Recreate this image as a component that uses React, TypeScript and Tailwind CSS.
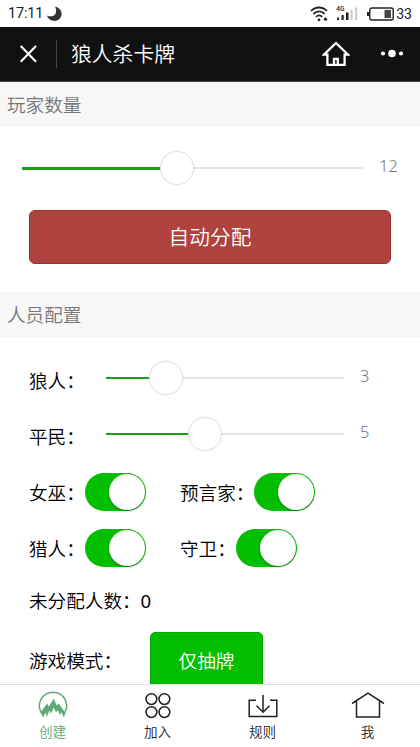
import type { ReactNode } from "react";
import { clsx } from "clsx";

interface TabItem {
  label: string;
  icon: ReactNode;
  active?: boolean;
}

const TABS: TabItem[] = [
  { label: "创建", icon: <MountainIcon />, active: true },
  { label: "加入", icon: <CirclesIcon /> },
  { label: "规则", icon: <InboxIcon /> },
  { label: "我", icon: <HouseIcon /> },
];

export default function App() {
  return (
    <div className="flex h-[747px] w-[420px] flex-col overflow-hidden bg-white font-['Noto_Sans','Noto_Sans_CJK_SC',sans-serif] text-[18.6px] font-[350] text-black">
      <StatusBar />
      <NavBar />

      <main className="min-h-0 flex-1 overflow-hidden">
        <SectionTitle>玩家数量</SectionTitle>
        <div className="h-[165px]">
          <div className="flex h-[83px] items-center pl-[22px]">
            <Slider className="w-[341px]" percent={45.4} />
            <SliderValue>12</SliderValue>
          </div>
          <button className="mx-auto block h-[54px] w-[362px] rounded-md border border-[#963330] bg-[#b0433f] text-[20.7px] leading-[52px] text-white">
            自动分配
          </button>
        </div>

        <SectionTitle>人员配置</SectionTitle>
        <div className="pl-[29px] pt-[13px]">
          <SliderRow label="狼人：" percent={25} value={3} />
          <SliderRow label="平民：" percent={41.7} value={5} />

          <div className="mt-0.5 flex h-14 items-center">
            <div className="flex w-[151px] items-center">
              <SwitchField label="女巫：" />
            </div>
            <SwitchField label="预言家：" />
          </div>
          <div className="flex h-14 items-center">
            <div className="flex w-[151px] items-center">
              <SwitchField label="猎人：" />
            </div>
            <SwitchField label="守卫：" />
          </div>

          <p className="flex h-[50px] items-center">
            未分配人数：<span className="font-normal">0</span>
          </p>
          <div className="mt-[6px] flex h-[57px] items-center">
            <span className="w-[121px]">游戏模式：</span>
            <button className="h-[57px] w-[113px] rounded-[5px] border border-[#02a802] bg-[#04be02] text-white">
              仅抽牌
            </button>
          </div>
        </div>
      </main>

      <nav className="grid h-[63px] shrink-0 grid-cols-4 border-t border-[#dedede] bg-white">
        {TABS.map((tab) => (
          <div
            key={tab.label}
            className={clsx(
              "flex flex-col items-center pt-[6px] text-[13.6px] leading-5",
              tab.active ? "text-[#5fa975]" : "text-[#222]",
            )}
          >
            {tab.icon}
            <span className="mt-[3px]">{tab.label}</span>
          </div>
        ))}
      </nav>
    </div>
  );
}

function StatusBar() {
  return (
    <div className="flex h-[27px] shrink-0 items-center pl-2 pr-[8px] text-[#222]">
      <span className="w-[34px] pt-0.5 font-[Roboto,sans-serif] text-[14.5px] font-normal leading-none tracking-[-0.2px]">17:11</span>
      <svg className="ml-[4px]" width="17" height="16" viewBox="0 0 17 16">
        <path d="M9 .5C13.4 2 15.8 4.6 15.6 8.2C15.2 12.8 11 15.6 7 14.8C3.8 14 1.8 12 .8 9.4C4 11 7.6 10.6 9.2 8.2C10.6 6 10.4 3.2 9 .5Z" fill="#333" />
      </svg>

      <svg className="ml-auto" width="18" height="16" viewBox="0 0 18 16" fill="none" stroke="#222" strokeWidth="1.8">
        <path d="M1 5C5.5.3 12.5.3 17 5M3.5 8C6.8 4.6 11.4 4.6 14.6 8M6 10.9C8 8.9 10.2 8.9 12.2 10.9" />
        <circle cx="9" cy="13.8" r="1.4" fill="#222" stroke="none" />
        <circle cx="15.5" cy="13.2" r="1.6" fill="#222" stroke="none" />
      </svg>
      <div className="relative ml-2 h-4 w-[22px]">
        <span className="absolute left-0 top-0 font-[Roboto,sans-serif] text-[6.5px] font-medium leading-[7px]">4G</span>
        <svg width="22" height="16" viewBox="0 0 22 16">
          <path d="M1 11.5h2V14H1zM5.5 9h2.2v5H5.5zM10 6.5h2.5V14H10z" fill="#222" />
          <path d="M14.5 4h2.2v10h-2.2zM19 1.5h2.2V14H19z" fill="#ccc" />
        </svg>
      </div>
      <svg className="ml-[9px]" width="27" height="14" viewBox="0 0 27 14">
        <rect x="2.8" y="1" width="23.4" height="12" rx="2" fill="none" stroke="#222" strokeWidth="1.4" />
        <path d="M0 5h2.5v4H0z" fill="#222" />
        <path d="M17.5 3H24v8h-6.5z" fill="#444" />
      </svg>
      <span className="ml-[2px] font-[Roboto,sans-serif] text-[14px] font-normal leading-none">33</span>
    </div>
  );
}

function NavBar() {
  return (
    <header className="flex h-[55px] shrink-0 items-center border-b border-[#444] bg-[#111] pl-5 pr-4 text-white">
      <svg width="17" height="18" viewBox="0 0 17 18" fill="none" stroke="currentColor" strokeWidth="2.2">
        <path d="M.7 1L16 16.8M16 1L.7 16.8" />
      </svg>
      <span className="ml-[19px] h-7 w-px bg-[#444]" />
      <h1 className="ml-[14px] pt-px text-[20.8px] leading-none">狼人杀卡牌</h1>
      <svg className="ml-auto" width="28" height="26" viewBox="0 0 28 26" fill="none" stroke="currentColor" strokeWidth="2.3">
        <path d="M2 13.6L14 2L26 13.6H22.6V23.8H5.4V13.6Z" />
        <path d="M12 23V17.8H15.8V23" />
      </svg>
      <svg className="ml-[30px]" width="24" height="10" viewBox="0 0 24 10" fill="currentColor">
        <circle cx="3" cy="4.5" r="2.1" />
        <circle cx="12" cy="4.5" r="3.8" />
        <circle cx="21" cy="4.5" r="2.1" />
      </svg>
    </header>
  );
}

function SectionTitle({ children }: { children: ReactNode }) {
  return (
    <h2 className="flex h-[45px] items-center bg-[#f7f7f7] pl-[7px] pt-px text-[#777]">{children}</h2>
  );
}

function Slider({ percent, className }: { percent: number; className?: string }) {
  return (
    <div className={clsx("relative -mt-px h-[2px] bg-[#e4e4e4]", className)}>
      <div className="h-[2.5px] bg-[#1aa01e]" style={{ width: `${percent}%` }} />
      {/* Thumb */}
      <span
        className="absolute -top-4 h-[34px] w-[34px] -translate-x-1/2 rounded-full border border-[#e0e0e0] bg-white shadow-[0_0_3px_rgba(0,0,0,0.06)]"
        style={{ left: `${percent}%` }}
      />
    </div>
  );
}

function SliderValue({ children }: { children: ReactNode }) {
  return <span className="ml-4 -mt-1 text-[16.5px] leading-none text-[#777]">{children}</span>;
}

function SliderRow({ label, percent, value }: { label: string; percent: number; value: number }) {
  return (
    <div className="flex h-14 items-center">
      <span className="w-[77px] pt-1.5">{label}</span>
      <Slider className="w-[238px]" percent={percent} />
      <SliderValue>{value}</SliderValue>
    </div>
  );
}

function SwitchField({ label }: { label: string }) {
  return (
    <>
      <span className="pt-0.5">{label}</span>
      <span className="flex h-[38px] w-[61px] items-center justify-end rounded-full bg-[#04be02] pr-px">
        <span className="h-9 w-9 rounded-full bg-white shadow-[0_1px_2px_rgba(0,0,0,0.4)]" />
      </span>
    </>
  );
}

function MountainIcon() {
  return (
    <svg width="32" height="28" viewBox="0 0 32 28">
      <path d="M4.2 21.5A13.6 13.6 0 1 1 27.8 21.5" fill="none" stroke="currentColor" strokeWidth="1.5" />
      <path
        d="M3.5 21.5L10 12.5L11.8 15.5L16.8 7.5L19.6 14.5L21.6 12.5L28.5 22L26.8 26.5L24.4 21L22.8 24L20.8 19L19 21.5L16.8 16.5L14 22.5L12.2 19.5L10 26L8.6 21.5L6.2 26.5Z"
        fill="currentColor"
      />
    </svg>
  );
}

function CirclesIcon() {
  return (
    <svg width="28" height="28" viewBox="0 0 28 28" fill="none" stroke="currentColor" strokeWidth="1.6">
      <circle cx="7.4" cy="8.1" r="5.4" />
      <circle cx="20.4" cy="8.1" r="5.4" />
      <circle cx="7.4" cy="21.1" r="5.4" />
      <circle cx="20.4" cy="21.1" r="5.4" />
    </svg>
  );
}

function InboxIcon() {
  return (
    <svg width="32" height="28" viewBox="0 0 32 28" fill="none" stroke="currentColor" strokeWidth="1.5">
      <path d="M9 9.2H2.2V25.4H29.8V9.2H23M16 4V21M9.5 14.8L16 21.3L22.5 14.8" />
    </svg>
  );
}

function HouseIcon() {
  return (
    <svg width="34" height="28" viewBox="0 0 34 28" fill="none" stroke="currentColor" strokeWidth="1.5">
      <path d="M1 12.5L17 2.2L33 12.5M5.5 10V26H28.5V10" />
    </svg>
  );
}
